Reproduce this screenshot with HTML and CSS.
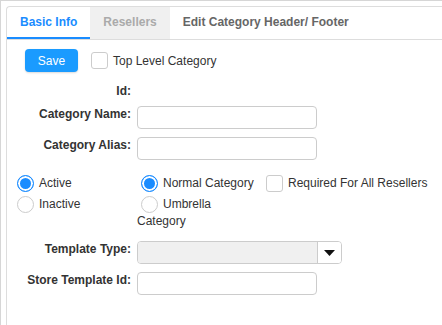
FILE: index.html
```html
<!DOCTYPE html>
<html lang="en">
<head>
  <meta charset="UTF-8" />
  <meta name="viewport" content="width=device-width, initial-scale=1.0" />
  <title>Category</title>
  <link rel="stylesheet" href="styles.css">
</head>
<body>
  <div class="page">
    <div class="panel">
      <nav class="tabs">
        <a class="tab active" href="#basic">Basic Info</a>
        <a class="tab disabled" href="#resellers">Resellers</a>
        <a class="tab" href="#header-footer">Edit Category Header/ Footer</a>
      </nav>

      <div class="content" id="basic">
        <div class="toolbar">
          <button class="btn-save" type="button">Save</button>
          <label class="check-label"><span class="checkbox"></span>Top Level Category</label>
        </div>

        <div class="form">
          <div class="row">
            <label class="field-label">Id:</label>
          </div>
          <div class="row">
            <label class="field-label">Category Name:</label>
            <input class="text-input" type="text">
          </div>
          <div class="row">
            <label class="field-label">Category Alias:</label>
            <input class="text-input" type="text">
          </div>
        </div>

        <div class="options">
          <div class="opt-col first">
            <label class="opt"><span class="radio checked"></span>Active</label>
            <label class="opt"><span class="radio"></span>Inactive</label>
          </div>
          <div class="opt-col second">
            <label class="opt"><span class="radio checked"></span>Normal Category</label>
            <label class="opt"><span class="radio"></span>Umbrella Category</label>
          </div>
          <div class="opt-col">
            <label class="opt"><span class="checkbox"></span>Required For All Resellers</label>
          </div>
        </div>

        <div class="form lower">
          <div class="row">
            <label class="field-label">Template Type:</label>
            <div class="select">
              <span class="select-value"></span>
              <span class="select-arrow">
                <svg width="11" height="6" viewBox="0 0 11 6"><path d="M0 0h11L5.5 6z" fill="#111"/></svg>
              </span>
            </div>
          </div>
          <div class="row">
            <label class="field-label">Store Template Id:</label>
            <input class="text-input" type="text">
          </div>
        </div>
      </div>
    </div>
  </div>
</body>
</html>
```

FILE: styles.css
```css
body {
  margin: 0;
  font-family: "Liberation Sans", Arial, sans-serif;
  font-size: 12px;
  color: #333;
  background: #fff;
  overflow: hidden;
}
.page {
  border-top: 1px solid #d6d6d6;
  border-left: 1px solid #d6d6d6;
  padding: 5px 0 0 5px;
  height: 400px;
}
.panel {
  border-top: 1px solid #ddd;
  border-left: 1px solid #ddd;
  border-top-left-radius: 4px;
  height: 100%;
}
.tabs {
  display: flex;
  border-bottom: 1px solid #ddd;
}
.tab {
  height: 30px;
  line-height: 30px;
  padding: 0 13px;
  font-weight: bold;
  color: #666;
  text-decoration: none;
  border-bottom: 2px solid transparent;
}
.tab.active {
  color: #1a8cff;
  border-bottom-color: #1a8cff;
}
.tab.disabled {
  color: #aaa;
  background: #f0f0f0;
}
.toolbar {
  display: flex;
  align-items: center;
  padding: 9px 0 0 18px;
}
.btn-save {
  width: 53px;
  height: 23px;
  border: 0;
  border-radius: 4px;
  background: #1a9bff;
  color: #fff;
  font-family: inherit;
  font-size: 12px;
  box-shadow: 0 1px 2px rgba(0, 0, 0, 0.15);
}
.check-label {
  display: flex;
  align-items: center;
  margin-left: 13px;
}
.check-label .checkbox {
  margin-right: 5px;
}
.checkbox {
  display: inline-block;
  box-sizing: border-box;
  width: 17px;
  height: 17px;
  border: 1px solid #ccc;
  border-radius: 3px;
  background: #fff;
}
.form {
  margin-top: 11px;
}
.row {
  display: flex;
  align-items: flex-start;
  margin-bottom: 8px;
}
.field-label {
  width: 124px;
  margin-right: 6px;
  padding-top: 1px;
  line-height: 14px;
  text-align: right;
  font-weight: bold;
}
.text-input {
  box-sizing: border-box;
  width: 180px;
  height: 23px;
  border: 1px solid #ccc;
  border-radius: 4px;
  padding: 0 6px;
  font-family: inherit;
  font-size: 12px;
}
.options {
  display: flex;
  margin: 15px 0 0 6px;
}
.opt-col.first {
  width: 124px;
}
.opt-col.second {
  width: 125px;
}
.opt {
  display: block;
  line-height: 16px;
  margin-bottom: 4px;
}
.opt .radio,
.opt .checkbox {
  vertical-align: -5px;
  margin: 0 5px 0 4px;
}
.radio {
  display: inline-block;
  box-sizing: border-box;
  width: 17px;
  height: 17px;
  border: 1px solid #ccc;
  border-radius: 50%;
  background: #fff;
}
.radio.checked {
  border-color: #1a8cff;
  background: #1a8cff;
  box-shadow: inset 0 0 0 2px #fff;
}
.form.lower {
  margin-top: 8px;
}
.select {
  display: flex;
  box-sizing: border-box;
  width: 205px;
  height: 23px;
  border: 1px solid #ccc;
  border-radius: 4px;
  overflow: hidden;
}
.select-value {
  flex: 1;
  background: #f0f0f0;
}
.select-arrow {
  width: 23px;
  border-left: 1px solid #ccc;
  display: flex;
  align-items: center;
  justify-content: center;
  background: #fff;
}
```
